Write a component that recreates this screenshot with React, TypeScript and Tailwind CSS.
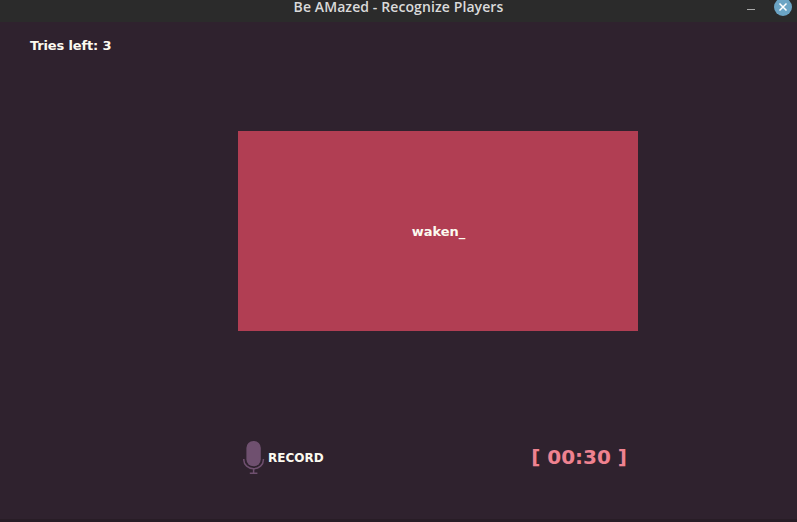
import React from 'react';

function Microphone() {
  return (
    <svg className="h-[34px] w-[22px] shrink-0" viewBox="0 0 22 34" fill="none">
      <rect x="3.400" y="0" width="14.400" height="25.300" rx="7" fill="#6f506f" />
      <path d="M.8 18v1a9.800 8.700 0 0 0 19.600 0v-1M10.600 27.500v4.500M6.800 32.200h7.600" stroke="#6f506f" strokeWidth="1.500" />
    </svg>
  );
}

export default function App() {
  return (
    <div className="flex h-[522px] w-[797px] flex-col overflow-hidden bg-[#2f222e] font-['DejaVu_Sans',sans-serif] font-bold text-[#fcfaf0]">
      <header className="grid h-[22px] shrink-0 grid-cols-[1fr_auto_1fr] bg-[#2b2b2b]">
        <span />
        <h1 className="font-['Open_Sans',sans-serif] text-sm leading-[14px] font-semibold tracking-[0.1px] whitespace-nowrap text-[#dadada]">Be AMazed - Recognize Players</h1>
        <div className="flex justify-end gap-[19px] pr-[5px]">
          <span className="mt-[9px] h-px w-2 bg-[#aaaaaa]" />
          <svg className="-mt-[2px] size-[18px]" viewBox="0 0 18 18" fill="none">
            <circle cx="9" cy="9" r="9" fill="#6ba4c4" />
            <path d="m5.500 5.500 7 7m0-7-7 7" stroke="white" strokeWidth="1.500" />
          </svg>
        </div>
      </header>
      <main className="flex min-h-0 flex-1 flex-col">
        <p className="mt-[16px] ml-[30px] text-[13px] leading-4 tracking-[-0.15px]">Tries left: 3</p>
        <section className="mt-[77px] ml-[238px] flex h-[200px] w-[400px] items-center justify-center bg-[#b13e53] pt-[2px] pl-px text-[13px] tracking-[-0.05px]">waken_</section>
        <div className="mt-[110px] ml-[243px] flex w-[384px] items-center justify-between">
          <button className="flex items-center gap-[3px] text-xs"><Microphone />RECORD</button>
          <time className="pb-[2px] text-xl text-[#ef8290]">[ 00:30 ]</time>
        </div>
      </main>
      <footer className="h-[3px] shrink-0 bg-[#281d26]" />
    </div>
  );
}
